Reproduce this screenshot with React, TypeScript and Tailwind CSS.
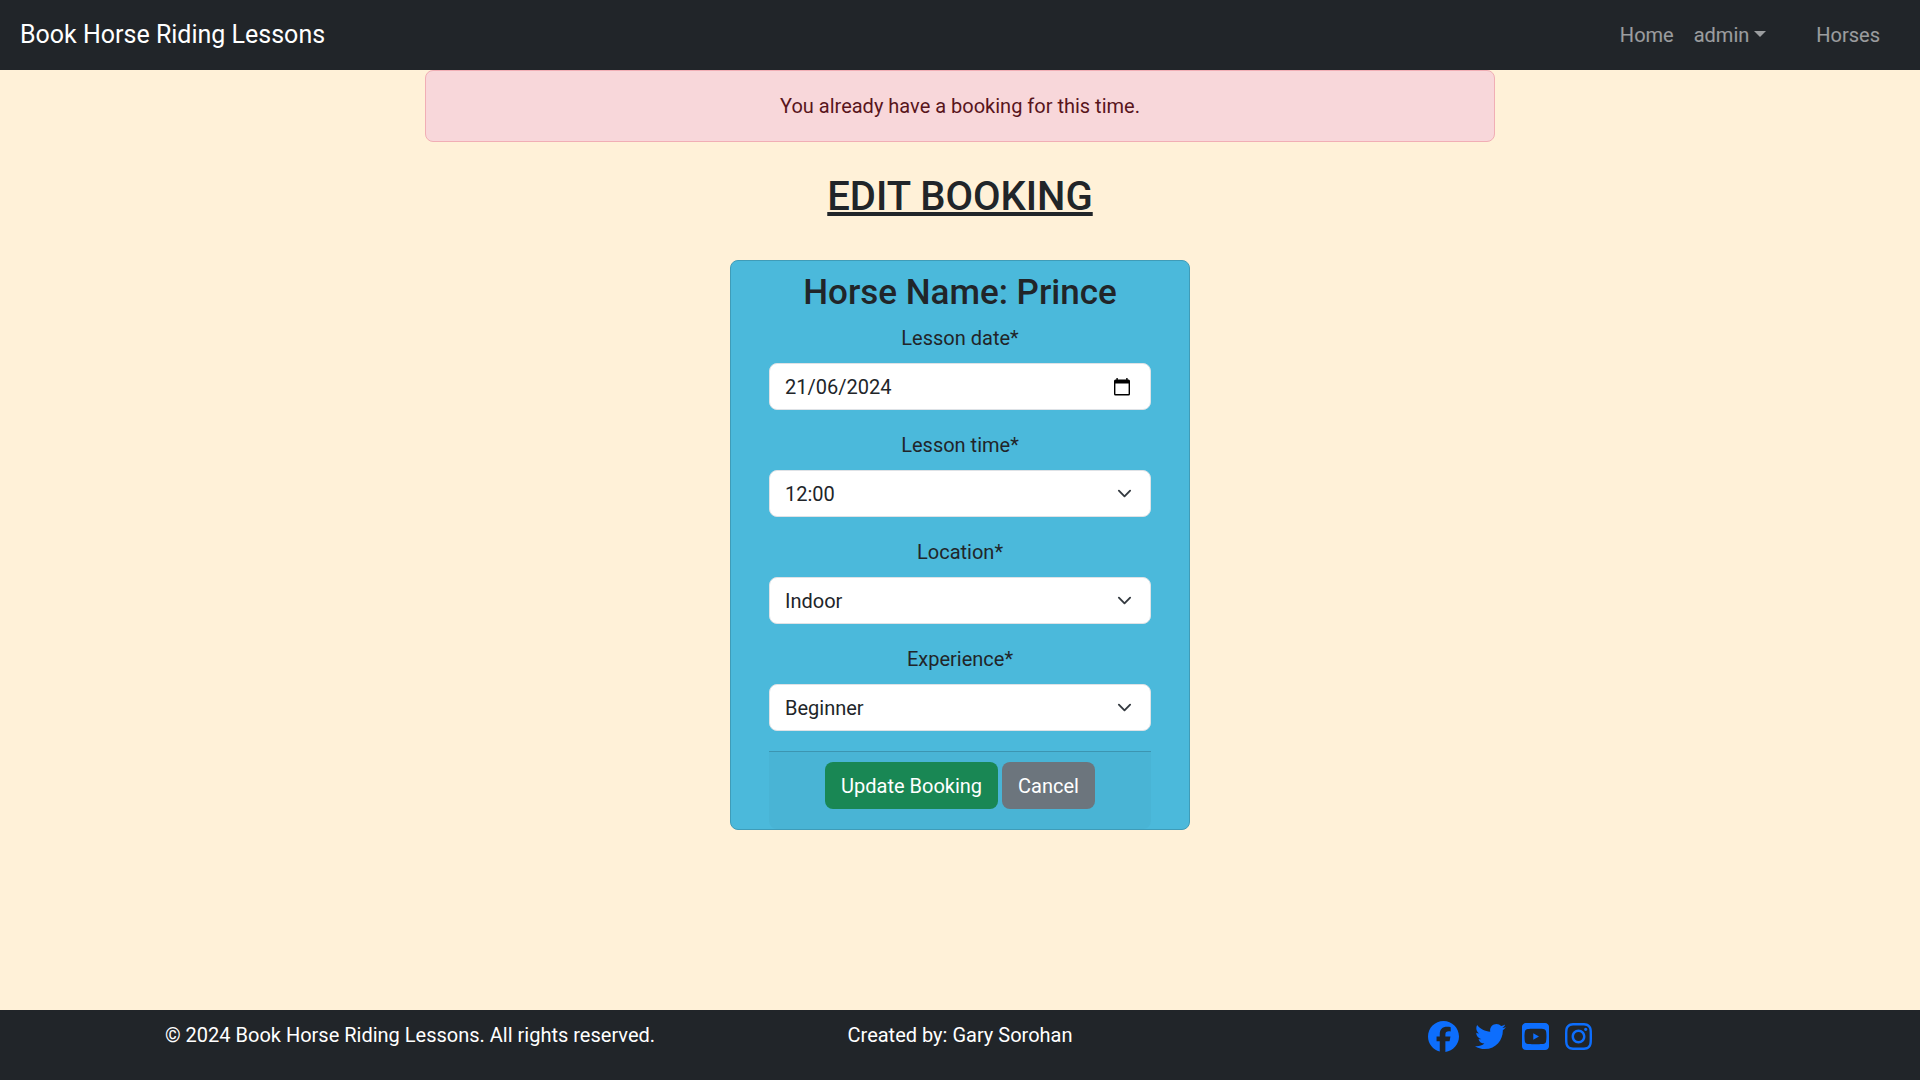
import { useState } from "react";
import type { ReactNode } from "react";
import { FaFacebook, FaInstagram, FaSquareYoutube, FaTwitter } from "react-icons/fa6";

function NavBar() {
  return (
    <nav className="flex h-[70px] items-center justify-between bg-[#212529] pr-[30px] pl-5">
      <a href="#" className="text-[25px] leading-[38px] text-white">
        Book Horse Riding Lessons
      </a>
      <ul className="flex items-center text-white/55">
        <li>
          <a href="#" className="block p-2.5">
            Home
          </a>
        </li>
        <li>
          <button type="button" className="flex items-center gap-[5px] p-2.5">
            admin
            <svg viewBox="0 0 12 8" className="h-2 w-3" aria-hidden="true">
              <path d="M0 0h12L6 6z" fill="currentColor" />
            </svg>
          </button>
        </li>
        <li className="ml-[30px]">
          <a href="#" className="block p-2.5">
            Horses
          </a>
        </li>
      </ul>
    </nav>
  );
}

function Field({ id, label, children }: { id: string; label: string; children: ReactNode }) {
  return (
    <div className="mb-5">
      <label htmlFor={id} className="mb-2.5 block text-center">
        {label}*
      </label>
      {children}
    </div>
  );
}

function DateField() {
  const [value, setValue] = useState("21/06/2024");
  return (
    <Field id="lesson-date" label="Lesson date">
      <div className="flex h-[47px] items-center rounded-lg border border-[#dee2e6] bg-white pr-5 pl-[15px]">
        <input
          id="lesson-date"
          type="text"
          inputMode="numeric"
          value={value}
          onChange={(e) => setValue(e.target.value)}
          className="min-w-0 flex-1 bg-transparent outline-none"
        />
        <button type="button" aria-label="Open calendar">
          <svg viewBox="0 0 16 18" className="h-[18px] w-4 text-black" aria-hidden="true">
            <path
              fill="currentColor"
              fillRule="evenodd"
              d="M2.4 0h1.4v1.6h8.4V0h1.4v1.6h.9A1.5 1.5 0 0 1 16 3.1v12.9a1.5 1.5 0 0 1-1.5 1.5h-13A1.5 1.5 0 0 1 0 16V3.1a1.5 1.5 0 0 1 1.5-1.5h.9zM1.4 5.6v10.5h13.2V5.6z"
            />
          </svg>
        </button>
      </div>
    </Field>
  );
}

function SelectField({ id, label, options, initial }: { id: string; label: string; options: string[]; initial: string }) {
  return (
    <Field id={id} label={label}>
      <div className="relative">
        <select
          id={id}
          defaultValue={initial}
          className="block h-[47px] w-full appearance-none rounded-lg border border-[#dee2e6] bg-white pr-11 pl-[15px]"
        >
          {options.map((option) => (
            <option key={option}>{option}</option>
          ))}
        </select>
        <svg
          viewBox="0 0 16 16"
          className="pointer-events-none absolute inset-y-0 right-[19px] my-auto size-[15px]"
          aria-hidden="true"
        >
          <path
            d="m2 5 6 6 6-6"
            fill="none"
            stroke="#343a40"
            strokeWidth="2"
            strokeLinecap="round"
            strokeLinejoin="round"
          />
        </svg>
      </div>
    </Field>
  );
}

function BookingCard() {
  return (
    <form
      onSubmit={(e) => e.preventDefault()}
      className="mt-[39px] w-full max-w-[460px] rounded-lg border border-[#3f9cb8] bg-[#4bb9db] px-[38px] pt-[11px]"
    >
      <h3 className="mb-[9px] text-center text-[35px] leading-[42px] font-medium">Horse Name: Prince</h3>
      <DateField />
      <SelectField id="lesson-time" label="Lesson time" options={["09:00", "10:00", "11:00", "12:00", "13:00"]} initial="12:00" />
      <SelectField id="location" label="Location" options={["Indoor", "Outdoor"]} initial="Indoor" />
      <SelectField id="experience" label="Experience" options={["Beginner", "Intermediate", "Advanced"]} initial="Beginner" />
      <div className="flex justify-center gap-1 rounded-b-lg border-t border-black/17 bg-[#212529]/3 pt-2.5 pb-5">
        <button type="submit" className="h-[47px] rounded-lg bg-[#198754] px-4 text-white">
          Update Booking
        </button>
        <button type="button" className="h-[47px] rounded-lg bg-[#6c757d] px-4 text-white">
          Cancel
        </button>
      </div>
    </form>
  );
}

function Footer() {
  return (
    <footer className="h-[70px] bg-[#212529] pt-2.5 text-white">
      <div className="mx-auto grid max-w-[1650px] grid-cols-3 text-center">
        <p>© 2024 Book Horse Riding Lessons. All rights reserved.</p>
        <p>Created by: Gary Sorohan</p>
        <div className="flex justify-center gap-4 pt-px text-[#0d6efd]">
          <a href="#" aria-label="Facebook">
            <FaFacebook className="size-[31px]" />
          </a>
          <a href="#" aria-label="Twitter">
            <FaTwitter className="size-[31px]" />
          </a>
          <a href="#" aria-label="YouTube">
            <FaSquareYoutube className="h-[31px] w-[27px]" />
          </a>
          <a href="#" aria-label="Instagram">
            <FaInstagram className="h-[31px] w-[27px]" />
          </a>
        </div>
      </div>
    </footer>
  );
}

export default function App() {
  return (
    <div className="flex min-h-screen flex-col bg-[#fff1d8] font-[Roboto,sans-serif] text-xl leading-[30px] text-[#212529]">
      <NavBar />
      <main className="flex flex-1 flex-col items-center">
        <div
          role="alert"
          className="w-full max-w-[1070px] rounded-lg border border-[#f1aeb5] bg-[#f8d7da] p-5 text-center text-[#58151c]"
        >
          You already have a booking for this time.
        </div>
        <h2 className="mt-[31px] text-[40px] leading-[48px] font-medium underline">EDIT BOOKING</h2>
        <BookingCard />
      </main>
      <Footer />
    </div>
  );
}
